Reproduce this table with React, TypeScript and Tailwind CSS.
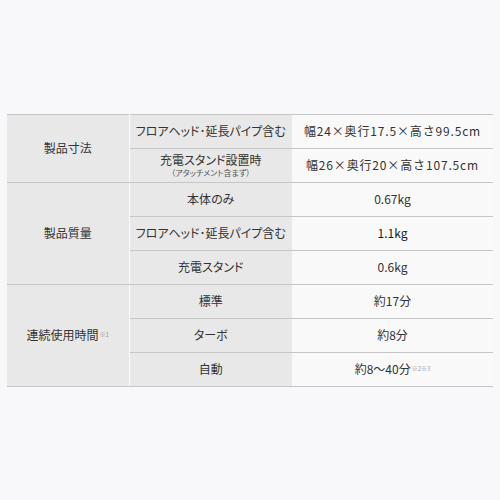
const font = { fontFamily: '"Noto Sans CJK JP", "Noto Sans", sans-serif' };

type Row = { sub: React.ReactNode; value: React.ReactNode };
type Group = { label: React.ReactNode; rows: Row[] };

const groups: Group[] = [
  {
    label: "製品寸法",
    rows: [
      { sub: "フロアヘッド･延長パイプ含む", value: <span className="tracking-[0.07em]">幅24×奥行17.5×高さ99.5cm</span> },
      {
        sub: (
          <div className="flex flex-col items-center leading-none gap-[3px]">
            <span>充電スタンド設置時</span>
            <span className="text-[8px] text-[#555]">（アタッチメント含まず）</span>
          </div>
        ),
        value: <span className="tracking-[0.07em]">幅26×奥行20×高さ107.5cm</span>,
      },
    ],
  },
  {
    label: "製品質量",
    rows: [
      { sub: "本体のみ", value: "0.67kg" },
      { sub: "フロアヘッド･延長パイプ含む", value: <span className="text-[#1a1a1a]">1.1kg</span> },
      { sub: "充電スタンド", value: "0.6kg" },
    ],
  },
  {
    label: (
      <span>
        連続使用時間<sup className="text-[6px] text-[#999] ml-[1px]">※1</sup>
      </span>
    ),
    rows: [
      { sub: "標準", value: "約17分" },
      { sub: "ターボ", value: "約8分" },
      {
        sub: "自動",
        value: (
          <span>
            約8〜40分<sup className="text-[6px] text-[#999] ml-[1px]">※2※3</sup>
          </span>
        ),
      },
    ],
  },
];

export default function App() {
  return (
    <div className="w-full h-[500px] bg-[#f8f7f9] flex items-center px-[7px]" style={font}>
      <table className="w-full border-collapse text-[12px] text-[#333]">
        <tbody>
          {groups.map((g, gi) =>
            g.rows.map((r, ri) => (
              <tr key={`${gi}-${ri}`} className={ri === 0 ? "border-t border-[#c6c6c6]" : ""}>
                {ri === 0 && (
                  <td
                    rowSpan={g.rows.length}
                    className="w-[122px] bg-[#e8e8e8] text-center align-middle border-r border-[#fafafa] border-b border-b-[#c6c6c6]"
                  >
                    {g.label}
                  </td>
                )}
                <td className="w-[163px] h-[34px] bg-[#e8e8e8] text-center align-middle whitespace-nowrap border-b border-[#c6c6c6] [font-feature-settings:'palt']">
                  {r.sub}
                </td>
                <td className="h-[34px] bg-[#f9f9f9] text-center align-middle whitespace-nowrap border-b border-[#c6c6c6]">
                  {r.value}
                </td>
              </tr>
            ))
          )}
        </tbody>
      </table>
    </div>
  );
}
